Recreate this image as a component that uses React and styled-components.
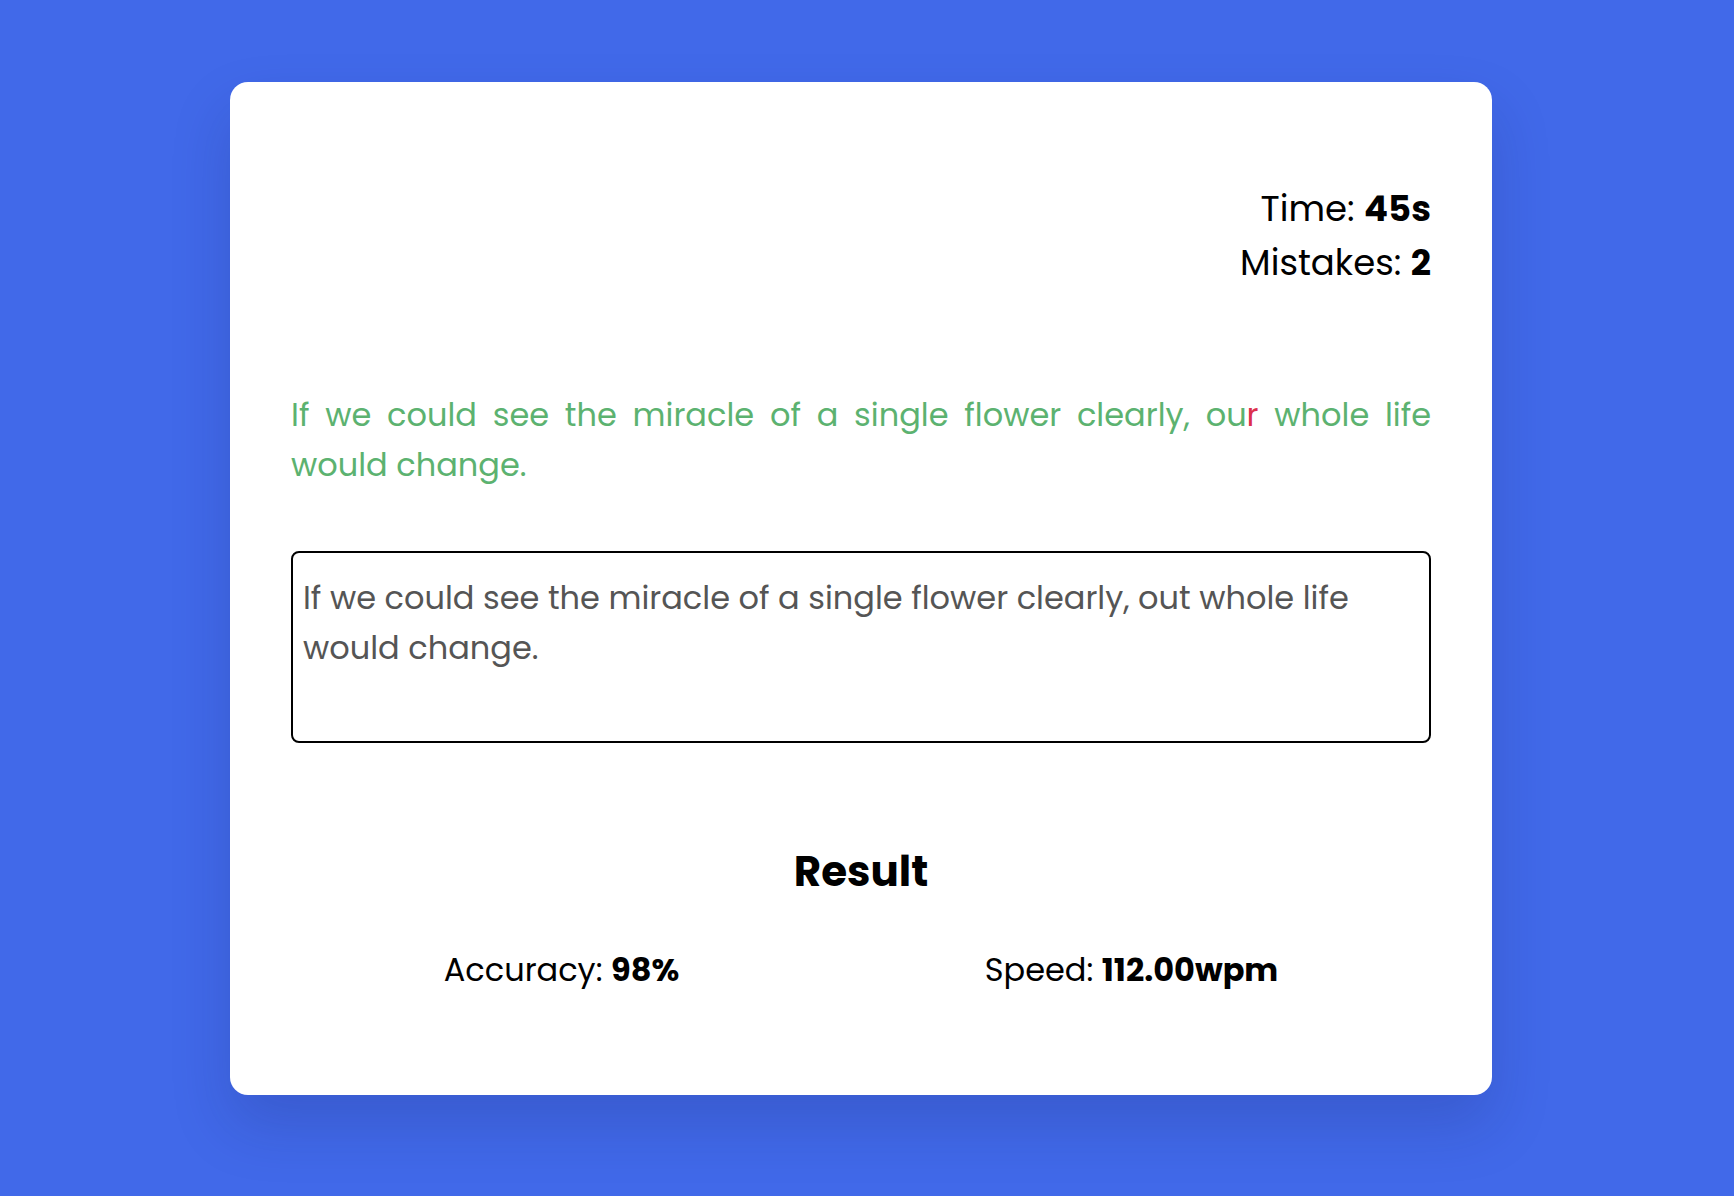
import React from 'react';
import styled, { createGlobalStyle } from 'styled-components';

const GlobalStyle = createGlobalStyle`
  * { box-sizing: border-box; }
  html, body {
    margin: 0;
    padding: 0;
    background: #4169e9;
    font-family: "Poppins", "Inter", "Noto Sans", sans-serif;
  }
`;

const Page = styled.div`
  min-height: 1196px;
  display: flex;
  justify-content: center;
  align-items: flex-start;
  padding: 82px 0 0 0;
`;

const Card = styled.div`
  width: 1262px;
  margin-right: 12px;
  background: #fff;
  border-radius: 18px;
  box-shadow: 0 30px 60px rgba(20, 30, 90, 0.18);
  padding: 100px 61px 103px 61px;
  display: flex;
  flex-direction: column;
`;

const Stats = styled.div`
  text-align: right;
  font-size: 35.5px;
  line-height: 54px;
  color: #000;
  b { font-weight: 700; }
`;

const Quote = styled.p`
  margin: 100px 0 0 0;
  font-size: 32px;
  line-height: 50px;
  text-align: justify;
  color: #5cb270;
`;

const Char = styled.span`
  color: ${props => (props.$wrong ? '#dc2f4d' : 'inherit')};
`;

const Input = styled.textarea`
  margin-top: 61px;
  height: 192px;
  width: 100%;
  resize: none;
  border: 2px solid #000;
  border-radius: 8px;
  padding: 20px 10px 10px 10px;
  font-family: inherit;
  font-size: 32px;
  line-height: 50px;
  color: #555;
  outline: none;
`;

const Result = styled.h2`
  margin: 99px 0 0 0;
  text-align: center;
  font-size: 42px;
  line-height: 60px;
  font-weight: 700;
  color: #000;
`;

const ResultRow = styled.div`
  margin-top: 45px;
  display: flex;
  justify-content: space-around;
  font-size: 32px;
  line-height: 45px;
  color: #000;
  b { font-weight: 700; }
`;

const quote = 'If we could see the miracle of a single flower clearly, our whole life would change.';
const typed = 'If we could see the miracle of a single flower clearly, out whole life would change.';

const App = () => {
  return (
    <>
      <GlobalStyle />
      <Page>
        <Card>
          <Stats>
            <div>Time: <b>45s</b></div>
            <div>Mistakes: <b>2</b></div>
          </Stats>
          <Quote>
            {quote.split('').map((c, i) => (
              <Char key={i} $wrong={typed[i] !== c}>{c}</Char>
            ))}
          </Quote>
          <Input defaultValue={typed} spellCheck={false} />
          <Result>Result</Result>
          <ResultRow>
            <span>Accuracy: <b>98%</b></span>
            <span>Speed: <b>112.00wpm</b></span>
          </ResultRow>
        </Card>
      </Page>
    </>
  );
};

export default App;
